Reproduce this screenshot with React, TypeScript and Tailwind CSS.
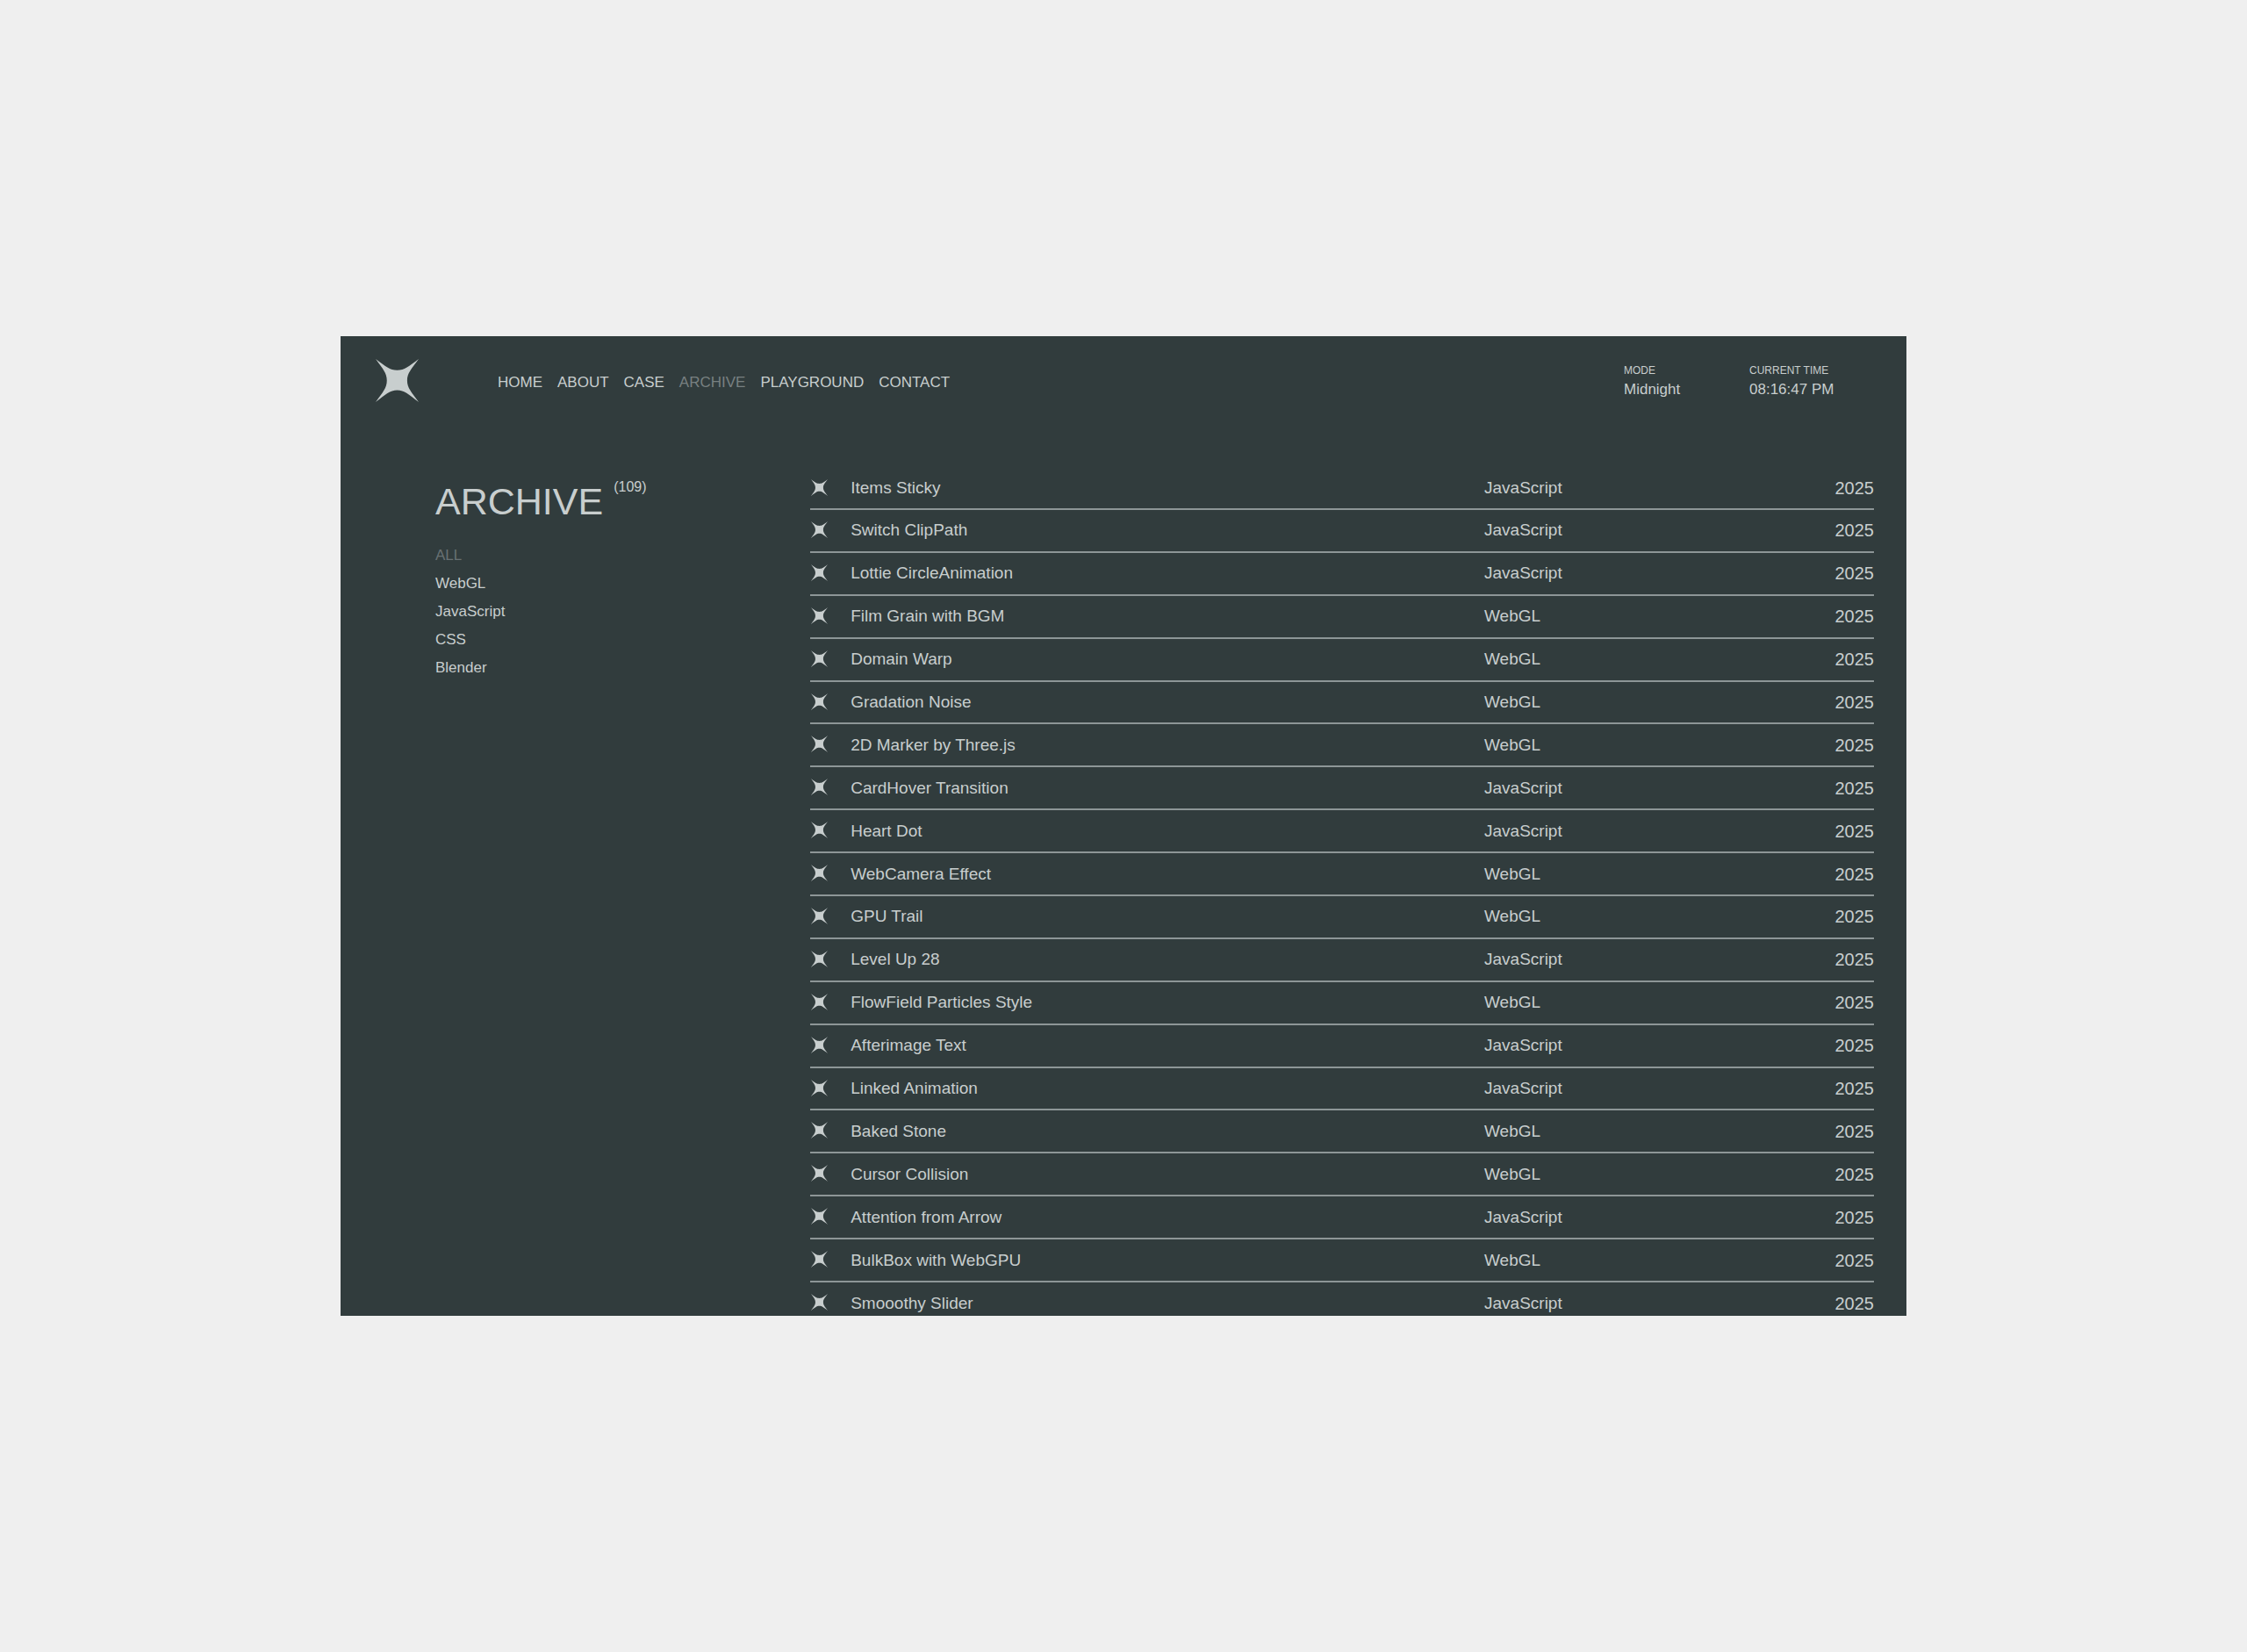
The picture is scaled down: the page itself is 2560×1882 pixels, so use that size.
import clsx from 'clsx';

type Category = 'WebGL' | 'JavaScript' | 'CSS' | 'Blender';

type ArchiveItem = {
  title: string;
  category: Category;
  year: number;
};

const navItems = ['HOME', 'ABOUT', 'CASE', 'ARCHIVE', 'PLAYGROUND', 'CONTACT'];

const filters = ['ALL', 'WebGL', 'JavaScript', 'CSS', 'Blender'];

const archiveItems: ArchiveItem[] = [
  { title: 'Items Sticky', category: 'JavaScript', year: 2025 },
  { title: 'Switch ClipPath', category: 'JavaScript', year: 2025 },
  { title: 'Lottie CircleAnimation', category: 'JavaScript', year: 2025 },
  { title: 'Film Grain with BGM', category: 'WebGL', year: 2025 },
  { title: 'Domain Warp', category: 'WebGL', year: 2025 },
  { title: 'Gradation Noise', category: 'WebGL', year: 2025 },
  { title: '2D Marker by Three.js', category: 'WebGL', year: 2025 },
  { title: 'CardHover Transition', category: 'JavaScript', year: 2025 },
  { title: 'Heart Dot', category: 'JavaScript', year: 2025 },
  { title: 'WebCamera Effect', category: 'WebGL', year: 2025 },
  { title: 'GPU Trail', category: 'WebGL', year: 2025 },
  { title: 'Level Up 28', category: 'JavaScript', year: 2025 },
  { title: 'FlowField Particles Style', category: 'WebGL', year: 2025 },
  { title: 'Afterimage Text', category: 'JavaScript', year: 2025 },
  { title: 'Linked Animation', category: 'JavaScript', year: 2025 },
  { title: 'Baked Stone', category: 'WebGL', year: 2025 },
  { title: 'Cursor Collision', category: 'WebGL', year: 2025 },
  { title: 'Attention from Arrow', category: 'JavaScript', year: 2025 },
  { title: 'BulkBox with WebGPU', category: 'WebGL', year: 2025 },
  { title: 'Smooothy Slider', category: 'JavaScript', year: 2025 },
];

function Star({ className }: { className?: string }) {
  return (
    <svg viewBox="0 0 146 146" fill="currentColor" aria-hidden="true" className={className}>
      <path d="M0 0C34 25 48 38 73 38S112 25 146 0C121 34 107 48 107 73S121 112 146 146C112 121 98 106 73 106S34 121 0 146C25 112 38 98 38 73S25 34 0 0Z" />
    </svg>
  );
}

function Header() {
  return (
    <header className="flex h-[100px] items-center pl-10">
      <a href="#home" aria-label="Home">
        <Star className="size-[49px]" />
      </a>
      <nav className="ml-[90px] flex gap-[17px] pt-1.5 text-[17px] leading-6">
        {navItems.map((item) => (
          <a key={item} href={`#${item.toLowerCase()}`} className={clsx(item === 'ARCHIVE' && 'text-[#788081]')}>
            {item}
          </a>
        ))}
      </nav>
      <dl className="ml-auto flex pt-0.5">
        <div className="w-[143px]">
          <dt className="text-xs leading-5">MODE</dt>
          <dd className="text-[17px] leading-6">Midnight</dd>
        </div>
        <div className="w-[179px]">
          <dt className="text-xs leading-5">CURRENT TIME</dt>
          <dd className="text-[17px] leading-6">08:16:47 PM</dd>
        </div>
      </dl>
    </header>
  );
}

function Sidebar() {
  return (
    <aside className="w-[30%] shrink-0 pt-[62px] pl-[108px]">
      <div className="flex items-start gap-3">
        <h1 className="text-[43px] leading-[52px]">ARCHIVE</h1>
        <span className="text-base leading-5">(109)</span>
      </div>
      <ul className="mt-5 text-[17px] leading-8">
        {filters.map((filter) => (
          <li key={filter}>
            <button type="button" className={clsx('block', filter === 'ALL' && 'text-[#687173]')}>
              {filter}
            </button>
          </li>
        ))}
      </ul>
    </aside>
  );
}

function ArchiveTable() {
  return (
    <div className="grow pt-[50px] pr-[37px]">
      <table className="h-[977px] w-full table-fixed border-collapse text-[19px] leading-6">
        <colgroup>
          <col className="w-[46px]" />
          <col />
          <col className="w-[344px]" />
          <col className="w-[100px]" />
        </colgroup>
        <tbody>
          {archiveItems.map((item) => (
            <tr key={item.title} className="border-b-2 border-[#8d9697]">
              <td className="p-0 pb-0.5">
                <Star className="ml-px size-[19px]" />
              </td>
              <td className="p-0">
                <a href="#archive">{item.title}</a>
              </td>
              <td className="p-0">{item.category}</td>
              <td className="p-0 text-right text-xl leading-6">{item.year}</td>
            </tr>
          ))}
        </tbody>
      </table>
    </div>
  );
}

export default function App() {
  return (
    <main className="flex min-h-screen items-center justify-center bg-[#efefef] px-[388px] font-['Liberation_Sans',Arial,sans-serif] text-[#c8cece]">
      <div className="aspect-[1784/1116] w-full overflow-hidden bg-[#313c3d]">
        <Header />
        <div className="flex">
          <Sidebar />
          <ArchiveTable />
        </div>
      </div>
    </main>
  );
}
